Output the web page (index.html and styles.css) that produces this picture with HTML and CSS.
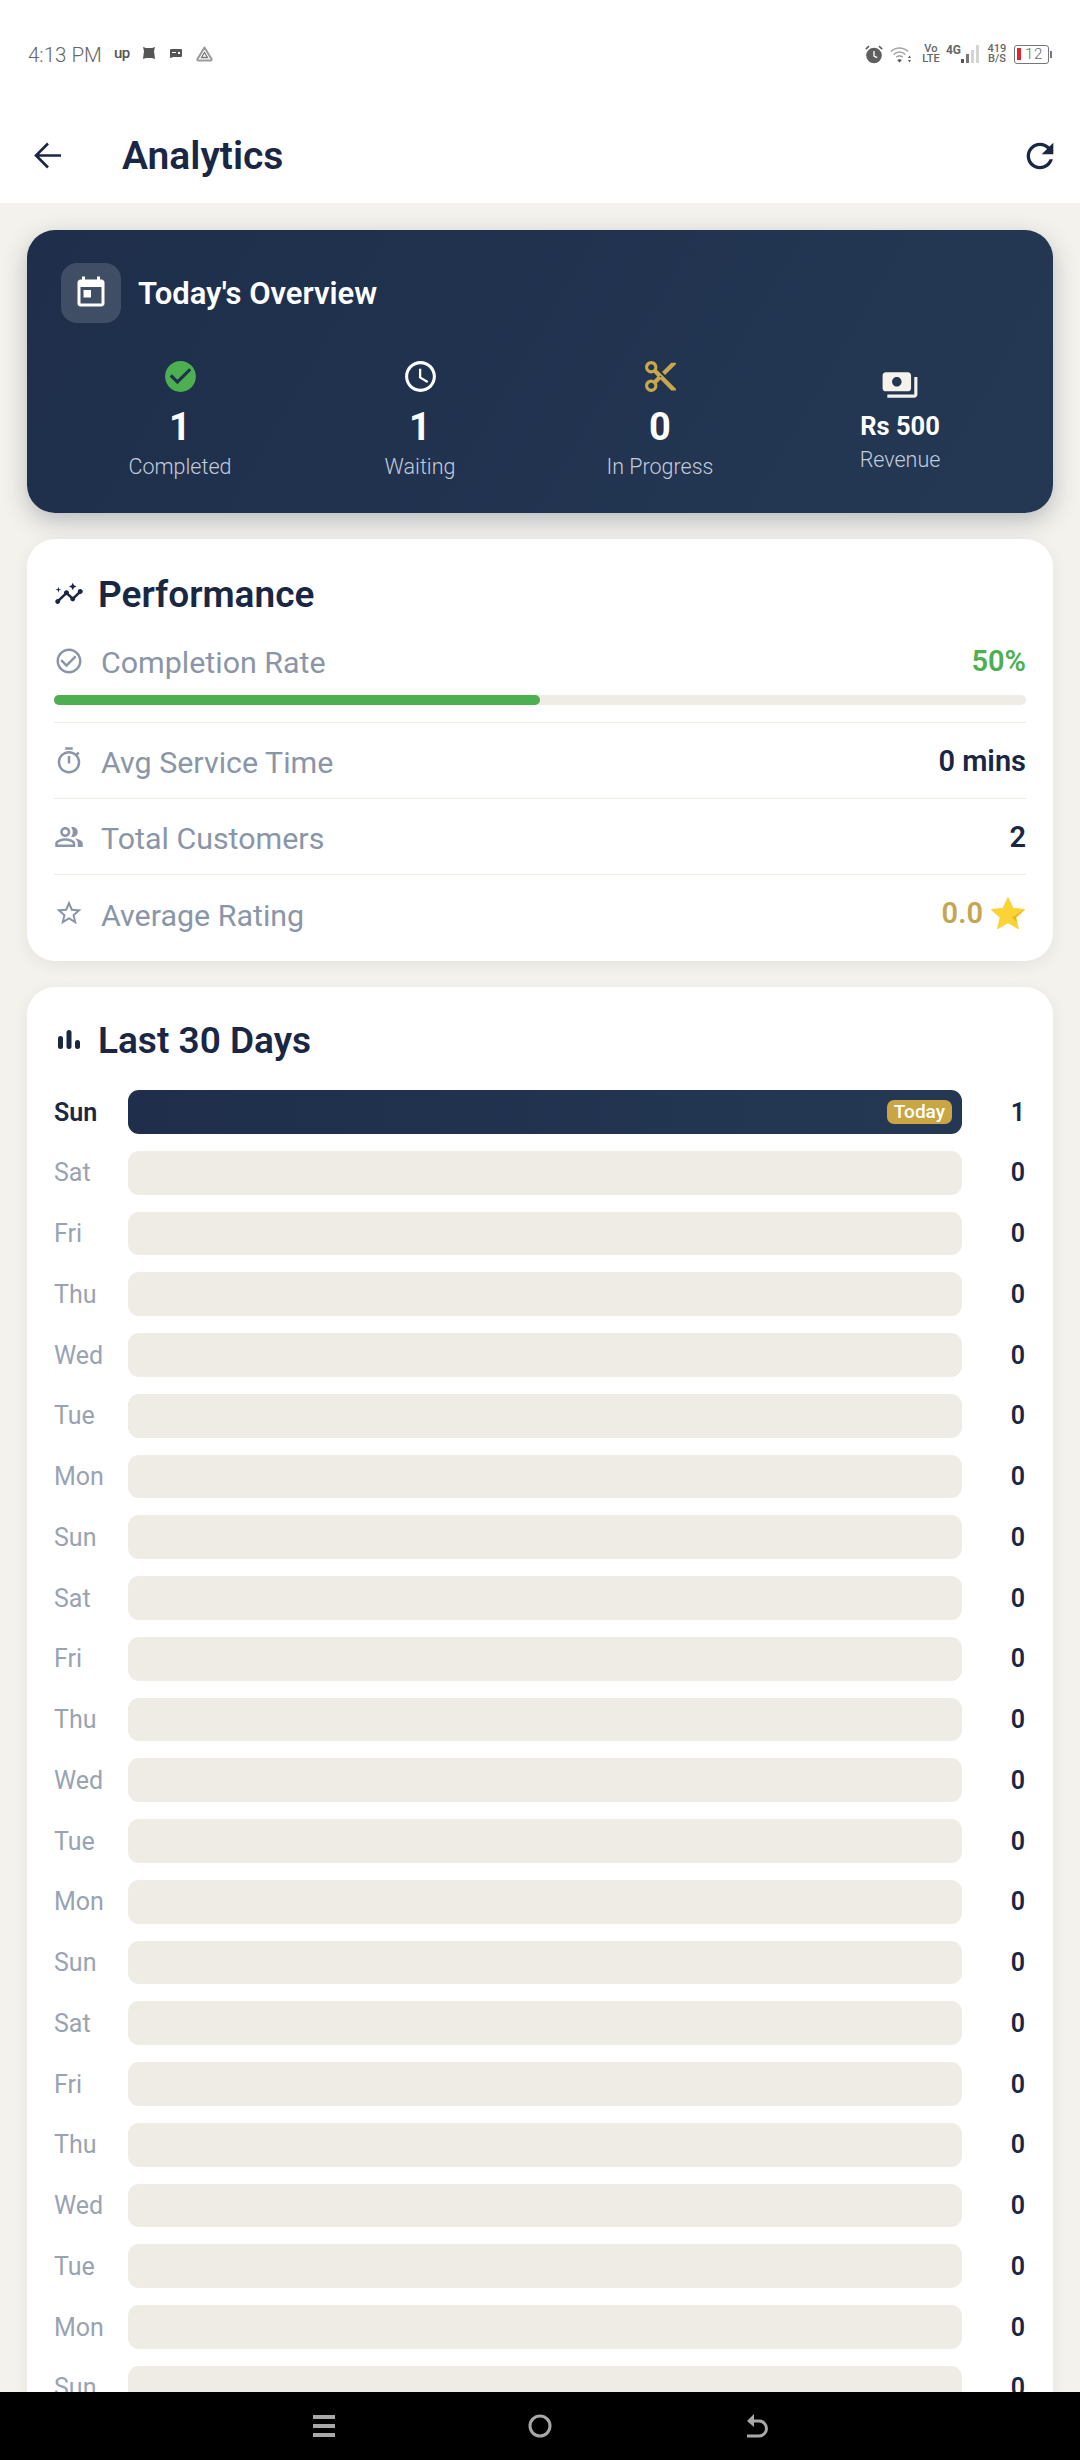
FILE: index.html
```html
<!DOCTYPE html>
<html lang="en">
<head>
  <meta charset="UTF-8" />
  <title>Analytics</title>
  <link rel="stylesheet" href="styles.css">
</head>
<body>
  <div class="screen">
    <div class="status-bar">
      <div class="status-left">
        <span class="status-time">4:13 PM</span>
        <span class="status-up">up</span>
        <svg class="status-app" width="14" height="13" viewBox="0 0 14 13"><path d="M1 0l3 1h6l3-1-1 4 1 8-3-1H4l-3 1 1-8z"/></svg>
        <svg class="status-app" width="12" height="9" viewBox="0 0 12 9"><path d="M1 0h10a1 1 0 0 1 1 1v6a1 1 0 0 1-1 1H3L1 9a1 1 0 0 1-1-1V1a1 1 0 0 1 1-1z"/><path d="M2 3h4v1H2zM8 3h2v2H8z" fill="#fff"/></svg>
        <svg class="status-drive" width="17" height="16" viewBox="0 0 17 16"><path d="M8.5 1.5L15.5 13a1 1 0 0 1-.9 1.5H2.4A1 1 0 0 1 1.5 13z" fill="none" stroke="#9a9a9a" stroke-width="2" stroke-linejoin="round"/><path d="M8.5 6.5L11.5 11.5H5.5z" fill="none" stroke="#777" stroke-width="1.3"/></svg>
      </div>
      <div class="status-right">
        <svg class="status-alarm" width="18" height="19" viewBox="0 0 18 19"><circle cx="9" cy="10.5" r="7.8" fill="#5f5f5f"/><path d="M9 6v5l3.2 1.6" fill="none" stroke="#fff" stroke-width="1.3"/><path d="M.8 4.2L4 1.2M17.2 4.2L14 1.2" stroke="#5f5f5f" stroke-width="1.6"/></svg>
        <svg class="status-wifi" width="22" height="17" viewBox="0 0 22 17"><path d="M1 5.5C6 .8 13 .8 18 5.5M3.6 8.5c3.6-3.2 8.2-3.2 11.8 0M6.2 11.2c2.2-1.8 4.4-1.8 6.6 0" fill="none" stroke="#a6a6a6" stroke-width="1.6"/><path d="M9.5 16.5l-2.4-2.6c1.5-1 3.3-1 4.8 0z" fill="#555"/><path d="M19.5 9.5l1.6 2.4h-3.2zM19.5 16.5l1.6-2.4h-3.2z" fill="#666"/></svg>
        <span class="status-two volte"><span>Vo</span><span>LTE</span></span>
        <span class="status-net">4G</span>
        <svg class="status-signal" width="18" height="18" viewBox="0 0 18 18"><path d="M0 14h3v4H0z" fill="#555"/><path d="M5 9h3v9H5z" fill="#777"/><path d="M10 5h3v13h-3zM15 0h3v18h-3z" fill="#d4d4d4"/></svg>
        <span class="status-two speed"><span>419</span><span>B/S</span></span>
        <div class="battery">
          <div class="battery-body"><i class="battery-level"></i><span>12</span></div>
          <i class="battery-cap"></i>
        </div>
      </div>
    </div>

    <header class="app-bar">
      <svg class="back-icon" width="28" height="27" viewBox="0 0 28 27"><path d="M27 13.5H2M14 1.5L2 13.5l12 12" fill="none" stroke="#1a2744" stroke-width="2.6"/></svg>
      <h1 class="app-title">Analytics</h1>
      <svg class="refresh-icon" width="40" height="40" viewBox="0 0 24 24"><path d="M17.65 6.35C16.2 4.9 14.21 4 12 4c-4.42 0-7.99 3.58-7.99 8s3.57 8 7.99 8c3.73 0 6.84-2.55 7.73-6h-2.08c-.82 2.33-3.04 4-5.65 4-3.31 0-6-2.69-6-6s2.69-6 6-6c1.66 0 3.14.69 4.22 1.78L13 11h7V4l-2.35 2.35z"/></svg>
    </header>

    <main class="content">
      <section class="hero">
        <div class="hero-head">
          <div class="hero-icon">
            <svg width="36" height="36" viewBox="0 0 24 24"><path d="M19 3h-1V1h-2v2H8V1H6v2H5c-1.11 0-1.99.9-1.99 2L3 19c0 1.1.89 2 2 2h14c1.1 0 2-.9 2-2V5c0-1.1-.9-2-2-2zm0 16H5V8h14v11zM7 10h5v5H7z"/></svg>
          </div>
          <h2 class="hero-title">Today's Overview</h2>
        </div>
        <div class="hero-stats">
          <div class="stat">
            <svg class="stat-icon green" viewBox="0 0 24 24"><path d="M12 2C6.48 2 2 6.48 2 12s4.48 10 10 10 10-4.48 10-10S17.52 2 12 2zm-2 15l-5-5 1.41-1.41L10 14.17l7.59-7.59L19 8l-9 9z"/></svg>
            <span class="stat-num">1</span>
            <span class="stat-label">Completed</span>
          </div>
          <div class="stat">
            <svg class="stat-icon white" viewBox="0 0 24 24"><path d="M11.99 2C6.47 2 2 6.48 2 12s4.47 10 9.99 10C17.52 22 22 17.52 22 12S17.52 2 11.99 2zM12 20c-4.42 0-8-3.58-8-8s3.58-8 8-8 8 3.58 8 8-3.58 8-8 8zm.5-13H11v6l5.25 3.15.75-1.23-4.5-2.67z"/></svg>
            <span class="stat-num">1</span>
            <span class="stat-label">Waiting</span>
          </div>
          <div class="stat">
            <svg class="stat-icon gold" viewBox="0 0 24 24"><path d="M9.64 7.64c.23-.5.36-1.05.36-1.64 0-2.21-1.79-4-4-4S2 3.79 2 6s1.79 4 4 4c.59 0 1.14-.13 1.64-.36L10 12l-2.36 2.36C7.14 14.13 6.59 14 6 14c-2.21 0-4 1.79-4 4s1.79 4 4 4 4-1.79 4-4c0-.59-.13-1.14-.36-1.64L12 14l7 7h3v-1L9.64 7.64zM6 8c-1.1 0-2-.89-2-2s.9-2 2-2 2 .89 2 2-.9 2-2 2zm0 12c-1.1 0-2-.89-2-2s.9-2 2-2 2 .89 2 2-.9 2-2 2zm6-7.5c-.28 0-.5-.22-.5-.5s.22-.5.5-.5.5.22.5.5-.22.5-.5.5zM19 3l-6 6 2 2 7-7V3h-3z"/></svg>
            <span class="stat-num">0</span>
            <span class="stat-label">In Progress</span>
          </div>
          <div class="stat stat-small">
            <svg class="stat-icon cream" viewBox="0 0 24 24"><path d="M19 14V6c0-1.1-.9-2-2-2H3c-1.1 0-2 .9-2 2v8c0 1.1.9 2 2 2h14c1.1 0 2-.9 2-2zm-9-1c-1.66 0-3-1.34-3-3s1.34-3 3-3 3 1.34 3 3-1.34 3-3 3zm13-6v11c0 1.1-.9 2-2 2H4v-2h17V7h2z"/></svg>
            <span class="stat-num">Rs 500</span>
            <span class="stat-label">Revenue</span>
          </div>
        </div>
      </section>

      <section class="card perf">
        <div class="card-head">
          <svg class="card-icon" viewBox="0 0 24 24"><path d="M21 8c-1.45 0-2.26 1.44-1.93 2.51l-3.55 3.56c-.3-.09-.74-.09-1.04 0l-2.55-2.55C12.27 10.45 11.46 9 10 9c-1.45 0-2.27 1.44-1.93 2.52l-4.56 4.55C2.44 15.74 1 16.55 1 18c0 1.1.9 2 2 2 1.45 0 2.26-1.44 1.93-2.51l4.55-4.56c.3.09.74.09 1.04 0l2.55 2.55C12.73 16.55 13.54 18 15 18c1.45 0 2.27-1.44 1.93-2.52l3.56-3.55c1.07.33 2.51-.48 2.51-1.93 0-1.1-.9-2-2-2z"/><path d="M15 9l.94-2.07L18 6l-2.06-.93L15 3l-.92 2.07L12 6l2.08.93zM3.5 11L4 9l2-.5L4 8l-.5-2L3 8l-2 .5L3 9z"/></svg>
          <h2 class="card-title">Performance</h2>
        </div>

        <div class="rate-block">
          <div class="metric-top">
            <div class="metric-name">
              <svg class="metric-icon" viewBox="0 0 24 24"><path d="M16.59 7.58L10 14.17l-3.59-3.58L5 12l5 5 8-8zM12 2C6.48 2 2 6.48 2 12s4.48 10 10 10 10-4.48 10-10S17.52 2 12 2zm0 18c-4.42 0-8-3.58-8-8s3.58-8 8-8 8 3.58 8 8-3.58 8-8 8z"/></svg>
              <span class="metric-label">Completion Rate</span>
            </div>
            <span class="metric-value val-green">50%</span>
          </div>
          <div class="progress"><div class="progress-fill" style="width: 50%"></div></div>
        </div>

        <div class="metric">
          <div class="metric-name">
            <svg class="metric-icon" viewBox="0 0 24 24"><path d="M9 1h6v2H9zM19.03 7.39l1.42-1.42c-.43-.51-.9-.99-1.41-1.41l-1.42 1.42C16.07 4.74 14.12 4 12 4c-4.97 0-9 4.03-9 9s4.02 9 9 9 9-4.03 9-9c0-2.12-.74-4.07-1.97-5.61zM12 20c-3.87 0-7-3.13-7-7s3.13-7 7-7 7 3.13 7 7-3.13 7-7 7zM11 8h2v6h-2z"/></svg>
            <span class="metric-label">Avg Service Time</span>
          </div>
          <span class="metric-value">0 mins</span>
        </div>
        <div class="metric">
          <div class="metric-name">
            <svg class="metric-icon" viewBox="0 0 24 24"><path d="M16.67 13.13C18.04 14.06 19 15.32 19 17v3h4v-3c0-2.18-3.57-3.47-6.33-3.87zM15 12c2.21 0 4-1.79 4-4s-1.79-4-4-4c-.47 0-.91.1-1.33.24C14.5 5.27 15 6.58 15 8s-.5 2.73-1.33 3.76c.42.14.86.24 1.33.24zM9 12c2.21 0 4-1.79 4-4s-1.79-4-4-4-4 1.79-4 4 1.79 4 4 4zm0-6c1.1 0 2 .9 2 2s-.9 2-2 2-2-.9-2-2 .9-2 2-2zM9 13c-2.67 0-8 1.34-8 4v3h16v-3c0-2.66-5.33-4-8-4zm6 5H3v-.99C3.2 16.29 6.3 15 9 15s5.8 1.29 6 2z"/></svg>
            <span class="metric-label">Total Customers</span>
          </div>
          <span class="metric-value">2</span>
        </div>
        <div class="metric metric-last">
          <div class="metric-name">
            <svg class="metric-icon" viewBox="0 0 24 24"><path d="M22 9.24l-7.19-.62L12 2 9.19 8.63 2 9.24l5.46 4.73L5.82 21 12 17.27 18.18 21l-1.63-7.03L22 9.24zM12 15.4l-3.76 2.27 1-4.28-3.32-2.88 4.38-.38L12 6.1l1.71 4.04 4.38.38-3.32 2.88 1 4.28L12 15.4z"/></svg>
            <span class="metric-label">Average Rating</span>
          </div>
          <div class="rating">
            <span class="metric-value val-gold">0.0</span>
            <svg class="rating-star" width="36" height="34" viewBox="0 0 34 32"><path d="M17 1.5l4.6 10 10.9 1.2-8.1 7.4 2.3 10.7L17 25l-9.7 5.8 2.3-10.7-8.1-7.4 10.9-1.2z" fill="#fbd335" stroke="#fbd335" stroke-linejoin="round"/><path d="M32.5 12.7l-8.1 7.4 1 4.7-4.4-4.6z" fill="#e8b321"/></svg>
          </div>
        </div>
      </section>

      <section class="card days">
        <div class="card-head">
          <svg class="card-icon small" viewBox="0 0 22 20"><rect x="0" y="6" width="5" height="13" rx="2.5"/><rect x="8.5" y="0" width="5" height="19" rx="2.5"/><rect x="17" y="10" width="5" height="9" rx="2.5"/></svg>
          <h2 class="card-title">Last 30 Days</h2>
        </div>
        <div class="day-list">
          <div class="day-row today"><span class="day-name">Sun</span><div class="day-bar"><span class="today-badge">Today</span></div><span class="day-count">1</span></div>
          <div class="day-row"><span class="day-name">Sat</span><div class="day-bar"></div><span class="day-count">0</span></div>
          <div class="day-row"><span class="day-name">Fri</span><div class="day-bar"></div><span class="day-count">0</span></div>
          <div class="day-row"><span class="day-name">Thu</span><div class="day-bar"></div><span class="day-count">0</span></div>
          <div class="day-row"><span class="day-name">Wed</span><div class="day-bar"></div><span class="day-count">0</span></div>
          <div class="day-row"><span class="day-name">Tue</span><div class="day-bar"></div><span class="day-count">0</span></div>
          <div class="day-row"><span class="day-name">Mon</span><div class="day-bar"></div><span class="day-count">0</span></div>
          <div class="day-row"><span class="day-name">Sun</span><div class="day-bar"></div><span class="day-count">0</span></div>
          <div class="day-row"><span class="day-name">Sat</span><div class="day-bar"></div><span class="day-count">0</span></div>
          <div class="day-row"><span class="day-name">Fri</span><div class="day-bar"></div><span class="day-count">0</span></div>
          <div class="day-row"><span class="day-name">Thu</span><div class="day-bar"></div><span class="day-count">0</span></div>
          <div class="day-row"><span class="day-name">Wed</span><div class="day-bar"></div><span class="day-count">0</span></div>
          <div class="day-row"><span class="day-name">Tue</span><div class="day-bar"></div><span class="day-count">0</span></div>
          <div class="day-row"><span class="day-name">Mon</span><div class="day-bar"></div><span class="day-count">0</span></div>
          <div class="day-row"><span class="day-name">Sun</span><div class="day-bar"></div><span class="day-count">0</span></div>
          <div class="day-row"><span class="day-name">Sat</span><div class="day-bar"></div><span class="day-count">0</span></div>
          <div class="day-row"><span class="day-name">Fri</span><div class="day-bar"></div><span class="day-count">0</span></div>
          <div class="day-row"><span class="day-name">Thu</span><div class="day-bar"></div><span class="day-count">0</span></div>
          <div class="day-row"><span class="day-name">Wed</span><div class="day-bar"></div><span class="day-count">0</span></div>
          <div class="day-row"><span class="day-name">Tue</span><div class="day-bar"></div><span class="day-count">0</span></div>
          <div class="day-row"><span class="day-name">Mon</span><div class="day-bar"></div><span class="day-count">0</span></div>
          <div class="day-row"><span class="day-name">Sun</span><div class="day-bar"></div><span class="day-count">0</span></div>
        </div>
      </section>
    </main>

    <nav class="nav-bar">
      <svg width="24" height="24" viewBox="0 0 24 24"><path d="M1 1h22v4H1zM1 10h22v4H1zM1 19h22v4H1z"/></svg>
      <svg width="24" height="24" viewBox="0 0 24 24"><circle cx="12" cy="12" r="10" fill="none" stroke="#a8a8a8" stroke-width="3"/></svg>
      <svg width="24" height="24" viewBox="0 0 24 24"><path d="M7 7h8a7 7 0 0 1 0 15H3" fill="none" stroke="#a8a8a8" stroke-width="3"/><path d="M10 0L3 7l7 6z"/></svg>
    </nav>
  </div>
</body>
</html>
```
FILE: styles.css
```css
* {
  box-sizing: border-box;
}

body {
  margin: 0;
  background-color: #f4f2ec;
  color: #1a2744;
  font-family: Roboto, "Liberation Sans", sans-serif;
}

h1, h2 {
  margin: 0;
}

.screen {
  display: flex;
  flex-direction: column;
  width: 1080px;
  height: 2460px;
  overflow: hidden;
}

/* status bar */
.status-bar {
  display: flex;
  flex: none;
  justify-content: space-between;
  align-items: center;
  height: 108px;
  padding: 0 28px;
  background-color: #fff;
}

.status-left, .status-right {
  display: flex;
  align-items: center;
}

.status-left {
  padding-top: 2px;
}

.status-time {
  width: 86px;
  color: #666;
  font-size: 20.5px;
  font-weight: 300;
}

.status-up {
  width: 28px;
  margin-top: -5px;
  color: #555;
  font-size: 15px;
  font-weight: 500;
  letter-spacing: -0.5px;
}

.status-app {
  margin-right: 14px;
  margin-top: -3px;
  fill: #555;
}

.status-drive {
  margin-top: -2px;
}

.status-alarm {
  margin-right: 7px;
}

.status-wifi {
  margin-right: 10px;
}

.status-two {
  display: flex;
  flex-direction: column;
  align-items: center;
  color: #666;
  font-size: 11px;
  font-weight: 500;
  line-height: 10px;
}

.volte {
  width: 18px;
  margin-right: 6px;
}

.status-net {
  margin-top: -8px;
  color: #666;
  font-size: 12px;
  font-weight: 700;
}

.status-signal {
  margin-right: 8px;
}

.speed {
  width: 20px;
  margin-right: 7px;
}

.battery {
  display: flex;
  align-items: center;
  gap: 1px;
}

.battery-body {
  display: flex;
  align-items: center;
  width: 35px;
  height: 19px;
  padding: 2px;
  border: 1.5px solid #777;
  border-radius: 3px;
  color: #666;
  font-size: 15px;
  font-weight: 300;
}

.battery-body span {
  margin-left: 4px;
  letter-spacing: 0.6px;
}

.battery-level {
  width: 4px;
  height: 12px;
  background-color: #e0262c;
}

.battery-cap {
  width: 2px;
  height: 7px;
  background-color: #777;
}

/* app bar */
.app-bar {
  display: flex;
  flex: none;
  align-items: center;
  height: 95px;
  padding: 0 20px 0 34px;
  background-color: #fff;
}

.back-icon {
  flex: none;
}

.app-title {
  flex: 1;
  margin-left: 60px;
  color: #1a2744;
  font-size: 39px;
  font-weight: 600;
}

.refresh-icon {
  fill: #1a2744;
}

/* scroll area */
.content {
  display: flex;
  flex: 1;
  flex-direction: column;
  gap: 26px;
  min-height: 0;
  padding: 27px 27px 0;
  overflow: hidden;
}

.hero {
  flex: none;
  height: 283px;
  padding: 33px 33px 0;
  border-radius: 28px;
  background: linear-gradient(120deg, #1e2e4b, #243854);
  box-shadow: 0 8px 24px rgba(30, 46, 75, 0.28);
  color: #fff;
}

.hero-head {
  display: flex;
  align-items: center;
  gap: 17px;
  margin-left: 1px;
}

.hero-icon {
  display: flex;
  justify-content: center;
  align-items: center;
  width: 60px;
  height: 60px;
  border-radius: 16px;
  background-color: rgba(255, 255, 255, 0.15);
  fill: #fff;
}

.hero-title {
  font-size: 31px;
  font-weight: 600;
}

.hero-stats {
  display: grid;
  grid-template-columns: repeat(4, 1fr);
  align-items: center;
  margin-top: 35px;
}

.stat {
  display: flex;
  flex-direction: column;
  align-items: center;
}

.stat-icon {
  width: 37px;
  height: 37px;
  margin-bottom: 9px;
}

.green { fill: #4caf50; }
.white { fill: #fff; }
.gold { fill: #c9a84c; }
.cream { fill: #f5f2ec; }

.stat-num {
  height: 46px;
  font-size: 38px;
  font-weight: 700;
  line-height: 46px;
}

.stat-label {
  margin-top: 3px;
  color: #c3ccdb;
  font-size: 21.5px;
  font-weight: 300;
  line-height: 28px;
}

.stat-small .stat-icon {
  width: 38px;
  height: 38px;
  margin-bottom: 7px;
}

.stat-small .stat-num {
  height: 30px;
  font-size: 25.5px;
  line-height: 30px;
}

.stat-small .stat-label {
  margin-top: 5px;
}

/* white cards */
.card {
  flex: none;
  padding: 33px 27px 10px;
  border-radius: 28px;
  background-color: #fff;
  box-shadow: 0 4px 16px rgba(30, 46, 75, 0.07);
}

.card-head {
  display: flex;
  align-items: center;
  gap: 14px;
  height: 44px;
}

.card-icon {
  width: 30px;
  height: 30px;
  fill: #1a2744;
}

.card-icon.small {
  width: 22px;
  height: 20px;
  margin: 0 4px;
}

.card-title {
  font-size: 37px;
  font-weight: 600;
}

.rate-block {
  margin-top: 25px;
  padding-bottom: 17px;
  border-bottom: 1.5px solid #eeece4;
}

.metric-top, .metric {
  display: flex;
  justify-content: space-between;
  align-items: center;
}

.metric-top {
  height: 40px;
}

.metric-top .metric-label {
  margin-top: 2px;
}

.metric {
  height: 76px;
  border-bottom: 1.5px solid #eeece4;
}

.metric-last {
  border-bottom: none;
}

.metric-name {
  display: flex;
  align-items: center;
  gap: 17px;
}

.metric-icon {
  width: 30px;
  height: 30px;
  fill: #8a96a8;
}

.metric-label {
  margin-top: 4px;
  color: #8a96a8;
  font-size: 30.4px;
}

.metric-value {
  font-size: 29px;
  font-weight: 600;
}

.val-green { color: #4caf50; }
.val-gold { color: #c4a653; }

.rating {
  display: flex;
  align-items: center;
  gap: 7px;
}

.progress {
  height: 10px;
  margin-top: 14px;
  border-radius: 5px;
  background-color: #eeece4;
}

.progress-fill {
  height: 100%;
  border-radius: 5px;
  background-color: #4caf50;
}

/* day rows */
.days {
  padding-top: 31px;
}

.day-list {
  display: flex;
  flex-direction: column;
  gap: 17px;
  margin-top: 28px;
}

.day-row {
  display: grid;
  grid-template-columns: 74px 1fr 64px;
  align-items: center;
  height: 43.76px;
}

.day-name {
  padding-top: 0.5px;
  color: #99a3b2;
  font-size: 25px;
}

.today .day-name {
  color: #1a2744;
  font-weight: 600;
}

.day-bar {
  display: flex;
  justify-content: flex-end;
  align-items: center;
  height: 100%;
  padding-right: 10px;
  border-radius: 11px;
  background-color: #eeece5;
}

.today .day-bar {
  background: linear-gradient(90deg, #1e2e4b, #243854);
}

.today-badge {
  padding: 0 7px;
  border-radius: 7px;
  background-color: #c9a544;
  color: #fff;
  font-size: 19px;
  font-weight: 500;
  line-height: 24px;
}

.day-count {
  padding-top: 0.5px;
  padding-right: 1px;
  font-size: 25px;
  font-weight: 600;
  text-align: right;
}

/* bottom nav */
.nav-bar {
  display: flex;
  flex: none;
  justify-content: center;
  align-items: center;
  gap: 192px;
  height: 68px;
  background-color: #000;
  fill: #a8a8a8;
}
```
